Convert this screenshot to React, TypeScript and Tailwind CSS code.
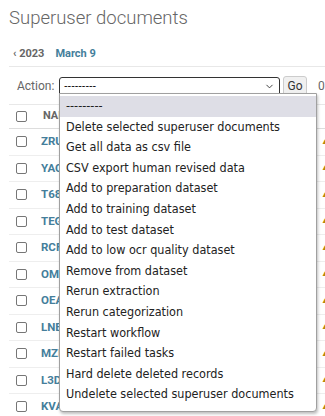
import { ChevronDown } from "lucide-react";

const rows = ["ZRU4K2", "YAC7P1", "T68QW3", "TEG9L0", "RCF2M8", "OMI5D6", "OEA3H4", "LNE8S2", "MZF1B7", "L3DX9T", "KVA6N5"];

const actions = [
  "---------",
  "Delete selected superuser documents",
  "Get all data as csv file",
  "CSV export human revised data",
  "Add to preparation dataset",
  "Add to training dataset",
  "Add to test dataset",
  "Add to low ocr quality dataset",
  "Remove from dataset",
  "Rerun extraction",
  "Rerun categorization",
  "Restart workflow",
  "Restart failed tasks",
  "Hard delete deleted records",
  "Undelete selected superuser documents",
];

function Box() {
  return <span className="block w-[11px] h-[11px] border border-[#767676] rounded-[2px] bg-white" />;
}

export default function App() {
  return (
    <div className="relative w-[325px] h-[416px] overflow-hidden bg-white font-['Roboto',sans-serif]">
      <div className="pl-[9px] pt-[4px] w-[600px]">
        <h1 className="text-[18.5px] leading-[28px] font-light text-[#666]">Superuser documents</h1>

        <div className="flex items-center gap-[11px] h-[24px] mt-[11px] pl-[4px] text-[11px] font-bold border-b border-[#e8e8e8] pb-[1px]">
          <span className="text-[#666]">‹ 2023</span>
          <span className="text-[#447e9b]">March 9</span>
        </div>

        <div className="flex items-center h-[37px] pl-[8px] pt-[1px] text-[12px] text-[#666] whitespace-nowrap">
          <span className="w-[42px] shrink-0">Action:</span>
          <div className="shrink-0 flex items-center justify-between w-[221px] h-[19px] border border-[#333] rounded-[3px] px-[4px]">
            <span className="text-[11px] text-black font-['DejaVu_Sans_Condensed','DejaVu_Sans',sans-serif]">---------</span>
            <ChevronDown size={11} strokeWidth={2} className="text-[#333]" />
          </div>
          <span className="shrink-0 ml-[3px] flex items-center justify-center w-[24px] h-[20px] rounded-[3px] border border-[#ccc] bg-[#f0f0f0] text-[12px] text-[#333]">Go</span>
          <span className="ml-[11px] text-[12px] text-[#666]">0 of 100 selected</span>
        </div>

        <div className="border-t border-[#e8e8e8]">
          <div className="flex items-center h-[24px] border-b border-[#ddd]">
            <span className="shrink-0 pl-[7px] w-[34px]"><Box /></span>
            <span className="text-[11px] font-bold text-[#666]">NAME</span>
          </div>
          {rows.map((r) => (
            <div key={r} className="flex items-center h-[26.5px] border-b border-[#eee]">
              <span className="shrink-0 pl-[7px] w-[32px]"><Box /></span>
              <span className="shrink-0 w-[280px] text-[11.5px] font-bold text-[#447e9b]">{r}</span>
              <span className="text-[8px] text-[#b8860b]">▲ ok</span>
            </div>
          ))}
        </div>
      </div>

      <ul className="absolute left-[59px] top-[93px] w-[258px] pb-[6px] pt-[2px] bg-white border border-[#a0a0a0] rounded-b-[4px] shadow-[1px_2px_3px_rgba(0,0,0,0.25)] font-['DejaVu_Sans_Condensed','DejaVu_Sans',sans-serif] text-[12.5px] text-[#222] whitespace-nowrap">
        {actions.map((a, i) => (
          <li
            key={a}
            className={
              i === 0
                ? "h-[20.6px] leading-[20.6px] px-[6px] bg-[#dedee6]"
                : "h-[20.6px] leading-[20.6px] px-[6px]"
            }
          >
            {a}
          </li>
        ))}
      </ul>
    </div>
  );
}
